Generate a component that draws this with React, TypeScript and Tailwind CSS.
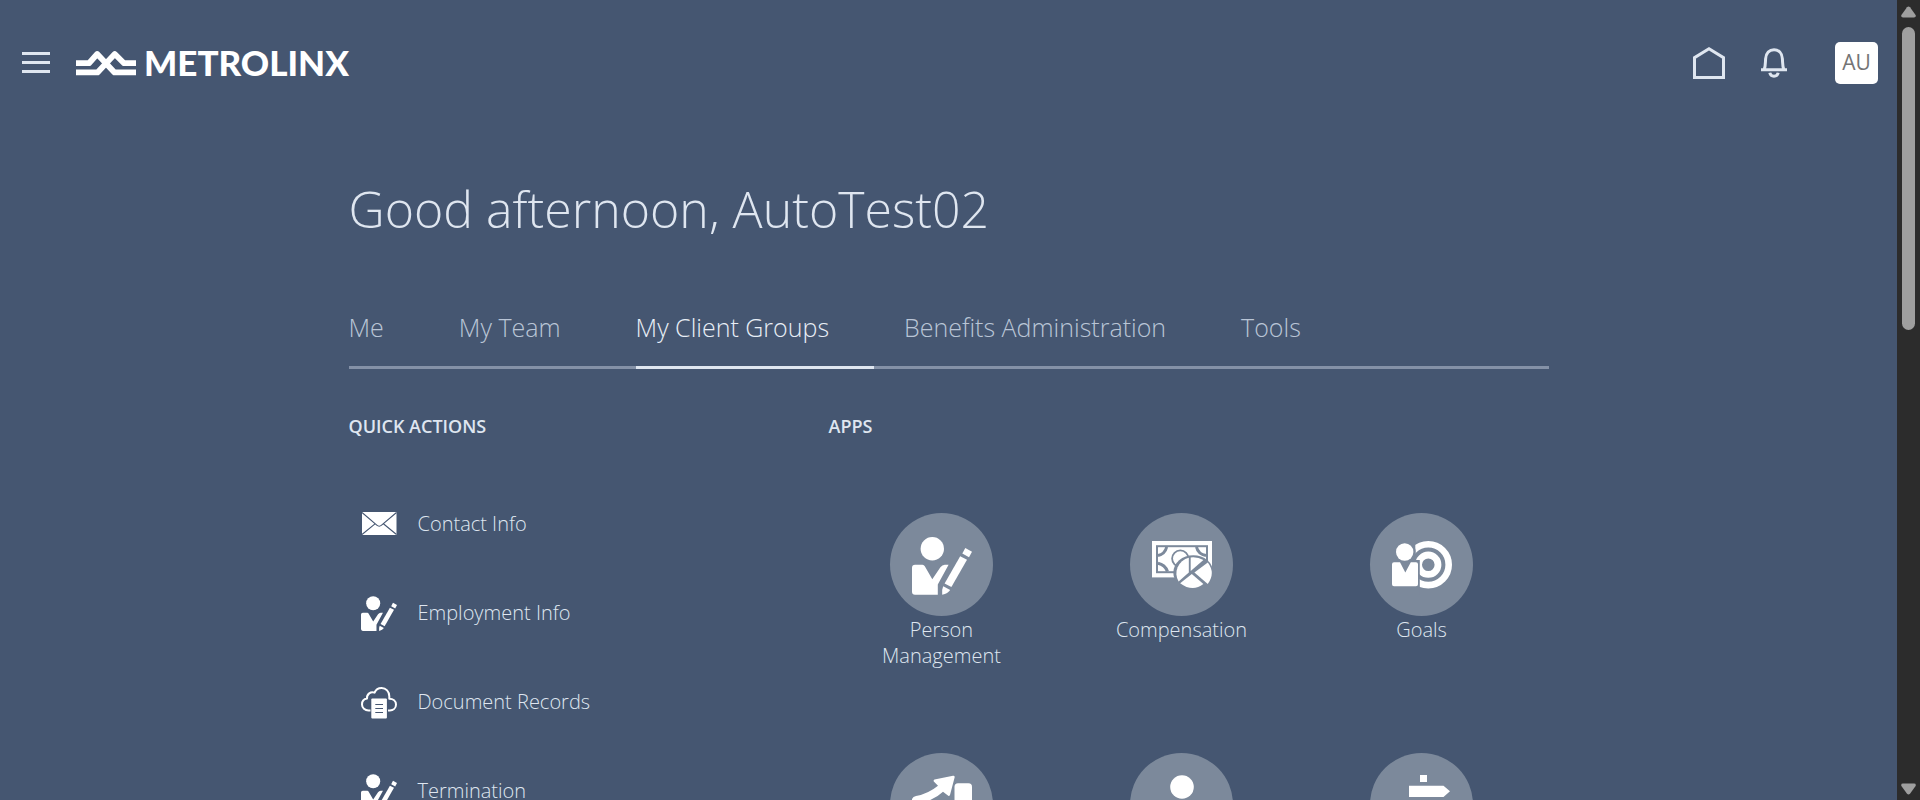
import React from "react";

type IconProps = { className?: string };

function PersonEditIcon({ className }: IconProps) {
  return (
    <svg viewBox="0 0 60 60" className={className} fill="currentColor" aria-hidden="true">
      <circle cx="20.3" cy="13.7" r="11.7" />
      <path d="M3 29.7H10.5Q12 29.7 12.8 31.2L20.3 44.3L28.4 32.2Q30.2 29.7 32.8 29.7H36.6L25.8 49.5V59.8H3Q0 59.8 0 56.8V32.7Q0 29.7 3 29.7Z" />
      <path d="M48.2 21.2L55 24.7L39.4 52L32.6 48.4Z" />
      <path d="M53.3 13L60 16.8L57 22.3L50.3 18.6Z" />
      <path d="M31.2 51.3L38.2 55Q36 58.5 30.2 59.8Q29.5 55 31.2 51.3Z" />
    </svg>
  );
}

function EnvelopeIcon({ className }: IconProps) {
  return (
    <svg viewBox="0 0 36 36" className={className} aria-hidden="true">
      <rect x="1" y="6" width="34.5" height="23" fill="currentColor" />
      <path d="M1 6.5L15.8 19.2Q18.2 21.2 20.6 19.2L35.5 6.5M1 28.5L14 17.8M35.5 28.5L22.4 17.8" fill="none" stroke="#455671" strokeWidth="1.1" />
    </svg>
  );
}

function CloudDocumentIcon({ className }: IconProps) {
  return (
    <svg viewBox="0 0 36 36" className={className} aria-hidden="true">
      <path d="M9.5 26.5H7.5C4 26.5 1 24 1 20.5C1 17.3 3.2 15 6 14.6C5.5 10.2 9.8 7 13.6 8.6C14.8 5.6 17.5 4 20.6 4C25 4 28.3 7.5 28.3 12.2V14.7C32 14.7 35 17 35 20.6C35 24 32.3 26.5 28.8 26.5H27" fill="none" stroke="currentColor" strokeWidth="2" strokeLinejoin="round" />
      <rect x="10.3" y="14.5" width="15.6" height="20" rx="1" fill="currentColor" />
      <path d="M14.3 20.5H22M14.3 24.5H22M14.3 28.5H22" stroke="#455671" strokeWidth="1.1" />
    </svg>
  );
}

function CompensationIcon({ className }: IconProps) {
  return (
    <svg viewBox="0 0 60 60" className={className} aria-hidden="true">
      <rect x="0" y="6" width="60" height="36.4" fill="#fff" />
      <rect x="5" y="11.2" width="50" height="26" fill="none" stroke="#7c899b" strokeWidth="2" />
      <path d="M6 20.5Q13 19 14.7 12M6 28.2Q13 29.5 15.5 36.5M54 20.5Q46 19 44.5 12" fill="none" stroke="#7c899b" strokeWidth="3" />
      <circle cx="28.3" cy="23.6" r="8.2" fill="none" stroke="#7c899b" strokeWidth="1.8" />
      <ellipse cx="41.3" cy="37.5" rx="20" ry="17.2" fill="#7c899b" />
      <path d="M36.8 22.8A16.6 16.2 0 0 0 26.6 46.6L36.8 37.4Z" fill="#fff" />
      <path d="M38.7 22.4Q45.5 21.6 51.4 25L38.7 36Z" fill="#fff" />
      <path d="M39.8 38.9L51.4 49Q40.5 57.5 28.2 48.2Z" fill="#fff" />
      <path d="M42.4 37.4L55.8 27.4Q63.8 38 55.8 49Z" fill="#fff" />
    </svg>
  );
}

function GoalsIcon({ className }: IconProps) {
  return (
    <svg viewBox="0 0 60 60" className={className} aria-hidden="true">
      <circle cx="36.3" cy="29.7" r="20.4" fill="none" stroke="#fff" strokeWidth="6.6" />
      <circle cx="36.3" cy="29.7" r="9.7" fill="none" stroke="#fff" strokeWidth="6.8" />
      <path d="M0 0H23.3V25H27.8V60H0Z" fill="#7c899b" />
      <circle cx="12.7" cy="17" r="11" fill="#7c899b" />
      <circle cx="12.7" cy="17" r="8.7" fill="#fff" />
      <path d="M2 27.3H8L13.3 37.5L18.8 27.3H24Q26 27.3 26 29.3V49.3Q26 51.3 24 51.3H2Q0 51.3 0 49.3V29.3Q0 27.3 2 27.3Z" fill="#fff" />
    </svg>
  );
}

function GrowthIcon({ className }: IconProps) {
  return (
    <svg viewBox="0 0 60 60" className={className} fill="currentColor" aria-hidden="true">
      <path d="M22.5 4.5L41 .8Q43 .5 42.6 2.5L38 20Q37 22 35.6 20.3L31 16.8Q24 23.5 14 26.5L3 31Q0 31 0 27V24Q1 21.5 4 21Q16 19 26 10.8L21.8 6.5Q21.2 5 22.5 4.5Z" />
      <rect x="42.5" y="8.3" width="17.5" height="51.5" rx="3.5" />
      <rect x="21.5" y="28" width="17.5" height="31.8" rx="3.5" />
      <rect x="0" y="38" width="17.5" height="21.8" rx="3.5" />
    </svg>
  );
}

function PersonIcon({ className }: IconProps) {
  return (
    <svg viewBox="0 0 60 60" className={className} fill="currentColor" aria-hidden="true">
      <circle cx="30" cy="12" r="11.8" />
      <path d="M12 29H22L30 44L38 29H48Q51 29 51 32V60H9V32Q9 29 12 29Z" />
    </svg>
  );
}

function SignpostIcon({ className }: IconProps) {
  return (
    <svg viewBox="0 0 60 60" className={className} fill="currentColor" aria-hidden="true">
      <path d="M28 0H35V7H28ZM17 10.8H51.5L58 16.3L51.5 22H17ZM28 26H35V29H28ZM46 32H11L5 37.5L11 43H46ZM28 47H35V60H28Z" />
    </svg>
  );
}

function MetrolinxMark({ className }: IconProps) {
  return (
    <svg viewBox="0 0 60 28" className={className} fill="none" stroke="currentColor" strokeWidth="5.8" strokeLinejoin="round" aria-hidden="true">
      <path d="M0 14.2H13L21.2 5L38.5 23.4H60" />
      <path d="M0 23.4H21.5L38.8 5L48 14.2H60" />
    </svg>
  );
}

const tabs = ["Me", "My Team", "My Client Groups", "Benefits Administration", "Tools"];

const quickActions = [
  { label: "Contact Info", Icon: EnvelopeIcon },
  { label: "Employment Info", Icon: PersonEditIcon },
  { label: "Document Records", Icon: CloudDocumentIcon },
  { label: "Termination", Icon: PersonEditIcon },
];

const apps = [
  { label: "Person Management", Icon: PersonEditIcon, showLabel: true },
  { label: "Compensation", Icon: CompensationIcon, showLabel: true },
  { label: "Goals", Icon: GoalsIcon, showLabel: true },
  { label: "Growth", Icon: GrowthIcon, showLabel: false },
  { label: "People", Icon: PersonIcon, showLabel: false },
  { label: "Directions", Icon: SignpostIcon, showLabel: false },
];

function Header() {
  return (
    <header className="flex h-[125px] items-center pr-[19px] pl-[22px] text-[#dfe6f0]">
      <button type="button" aria-label="Navigator" className="flex w-7 flex-col gap-[6px]">
        <span className="h-[3px] bg-current" />
        <span className="h-[3px] bg-current" />
        <span className="h-[3px] bg-current" />
      </button>
      <a href="#home" className="ml-[26px] flex items-center gap-2 text-white">
        <MetrolinxMark className="h-7 w-[60px]" />
        <span className="pb-0.5 font-[Lato] text-[35px] leading-7 font-black">METROLINX</span>
      </a>
      <div className="ml-auto flex items-center">
        <button type="button" aria-label="Home">
          <svg viewBox="0 0 32 32" className="h-8 w-8" fill="none" stroke="currentColor" strokeWidth="3" aria-hidden="true">
            <path d="M1.5 30.5V10.6L16 1.8L30.5 10.6V30.5Z" />
          </svg>
        </button>
        <button type="button" aria-label="Notifications" className="ml-9">
          <svg viewBox="0 0 26 30" className="h-[30px] w-[26px]" fill="none" stroke="currentColor" strokeWidth="3" aria-hidden="true">
            <path d="M0 21.7H26M3.2 21.5C4.6 18 4.3 15 4.6 10.8C5 5 8.4 1.7 13 1.7S21 5 21.4 10.8C21.7 15 21.4 18 22.8 21.5" />
            <path d="M8.8 24.8Q9.5 28.2 13 28.2T17.2 24.8" />
          </svg>
        </button>
        <button type="button" className="ml-12 h-[42px] w-[43px] rounded-[5px] bg-white text-[21px] text-[#747474]">
          AU
        </button>
      </div>
    </header>
  );
}

function ScrollTrack() {
  return (
    <div aria-hidden="true" className="flex w-[23px] shrink-0 flex-col items-center bg-[#2c2c2c] pt-[6px] pb-[5px] text-[#9f9f9f]">
      <svg viewBox="0 0 15 12" className="h-3 w-[15px]" fill="currentColor">
        <path d="M6 1.2Q7.5 -.4 9 1.2L14.6 9Q15.4 11.5 13 11.5H2Q-.4 11.5 .4 9Z" />
      </svg>
      <div className="mt-[9px] h-5/13 w-[13px] rounded-full bg-[#9f9f9f]" />
      <svg viewBox="0 0 15 12" className="mt-auto h-3 w-[15px]" fill="currentColor">
        <path d="M6 10.8Q7.5 12.4 9 10.8L14.6 3Q15.4 .5 13 .5H2Q-.4 .5 .4 3Z" />
      </svg>
    </div>
  );
}

export default function App() {
  return (
    <div className="flex h-screen bg-[#455671] font-['Open_Sans',sans-serif] text-[#dfe6f0]">
      <div className="min-w-0 flex-1 overflow-hidden">
        <Header />
        <main className="mx-auto max-w-[1200px]">
          <h1 className="pt-[46px] text-[50px] leading-[76px] font-light">Good afternoon, AutoTest02</h1>
          <nav aria-label="Sections" className="mt-[54px] flex gap-[30px] border-b-[3px] border-[#8491a7] text-[25px] leading-9 font-light whitespace-nowrap">
            {tabs.map((tab) => (
              <a
                key={tab}
                href="#sections"
                aria-current={tab === "My Client Groups" ? "page" : undefined}
                className={
                  tab === "My Client Groups"
                    ? "-mb-[3px] border-b-[3px] border-[#dfe6f0] pt-2 pr-[45px] pb-[21px] text-[#e8eef6]"
                    : "pt-2 pr-[45px] pb-[21px] text-[#b9c5d6]"
                }
              >
                {tab}
              </a>
            ))}
          </nav>
          <div className="grid grid-cols-[2fr_3fr] pt-[45px]">
            <section>
              <h2 className="text-lg leading-6 font-semibold">QUICK ACTIONS</h2>
              <ul className="pt-[41px]">
                {quickActions.map(({ label, Icon }) => (
                  <li key={label}>
                    <a href="#quick-actions" className="flex h-[89px] items-center gap-[21px] pl-3 text-xl font-light">
                      <Icon className="h-9 w-9 text-white" />
                      {label}
                    </a>
                  </li>
                ))}
              </ul>
            </section>
            <section>
              <h2 className="text-lg leading-6 font-semibold">APPS</h2>
              <ul className="grid grid-cols-3 pt-[75px] text-center text-xl leading-[26px] font-light">
                {apps.map(({ label, Icon, showLabel }) => (
                  <li key={label} className="pr-11 pl-[30px]">
                    <a href="#apps" aria-label={label} className="flex h-60 flex-col items-center">
                      <span className="grid h-[103px] w-[103px] place-items-center rounded-full bg-[#7c899b]">
                        <Icon className="h-[60px] w-[60px] text-white" />
                      </span>
                      {showLabel && <span className="pt-px">{label}</span>}
                    </a>
                  </li>
                ))}
              </ul>
            </section>
          </div>
        </main>
      </div>
      <ScrollTrack />
    </div>
  );
}
